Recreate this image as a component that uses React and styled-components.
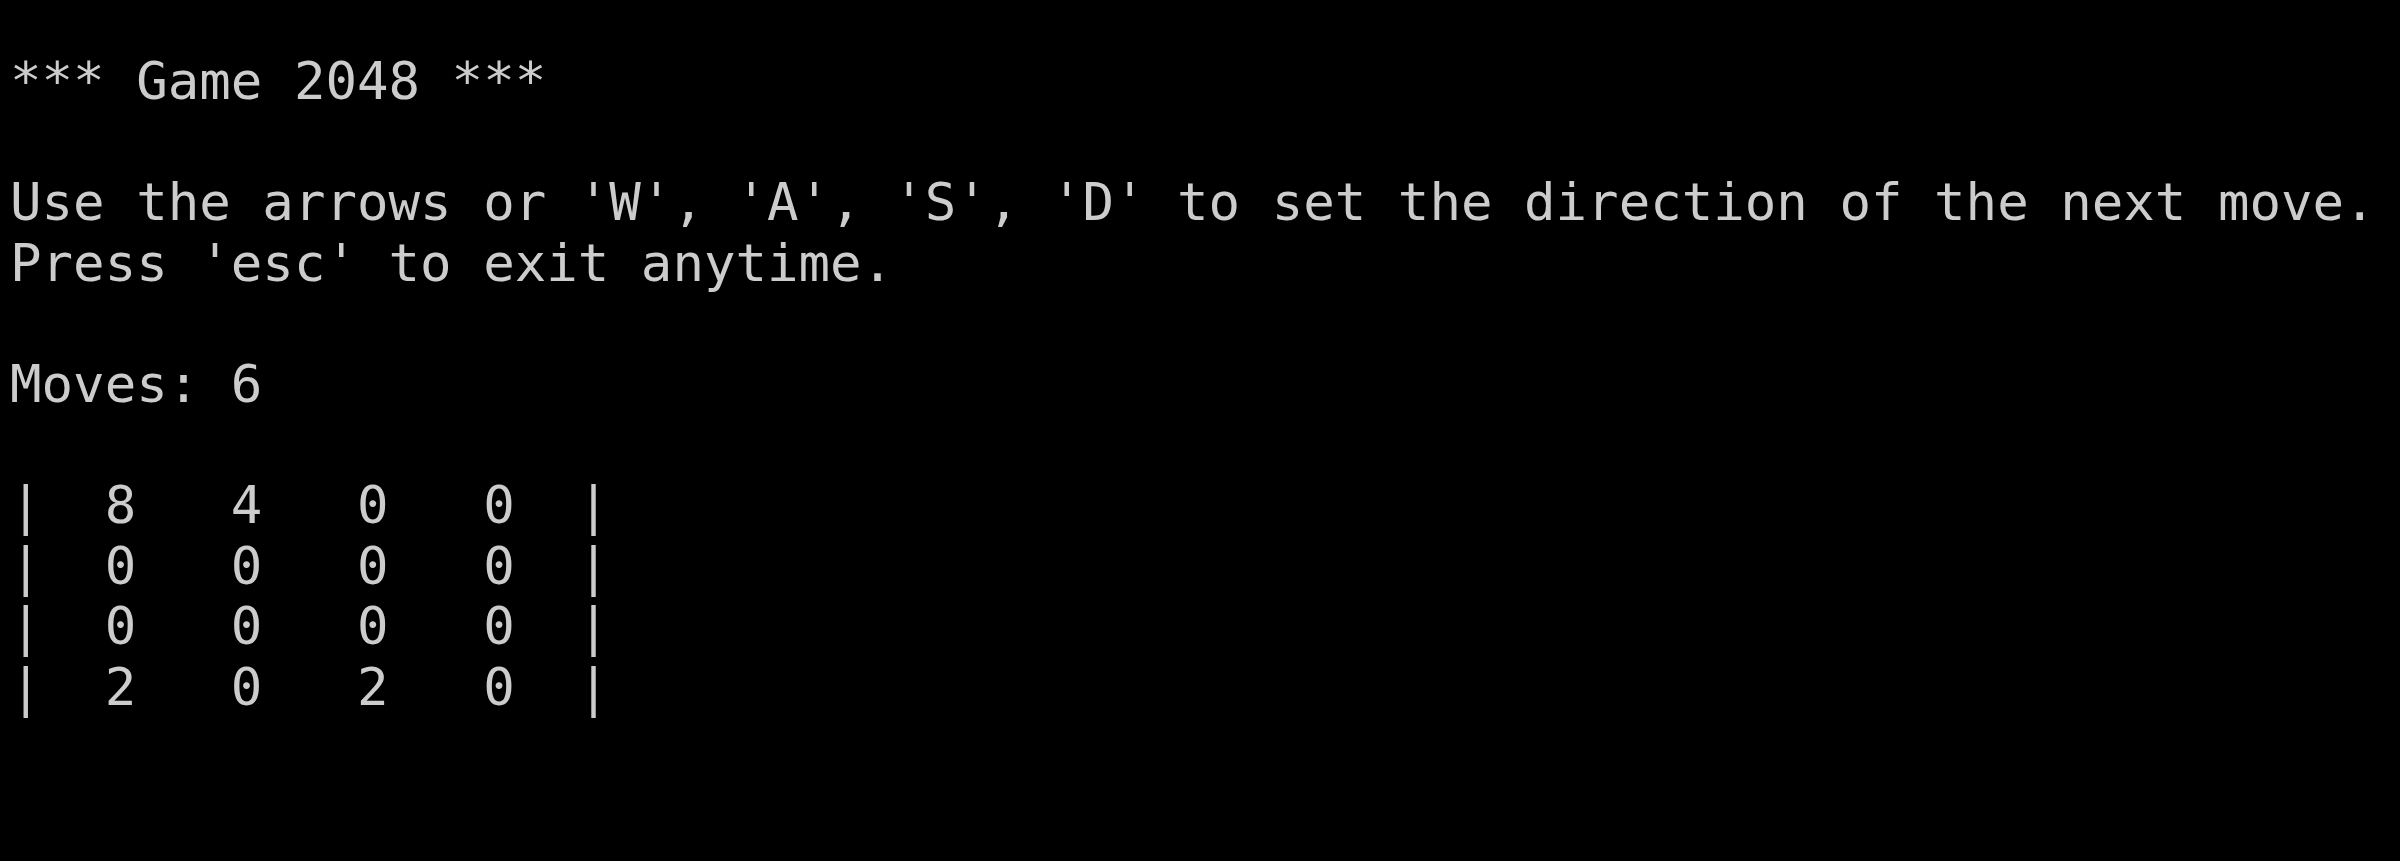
import React from "react";
import styled, { createGlobalStyle } from "styled-components";

const GlobalStyle = createGlobalStyle`
  html, body {
    margin: 0;
    padding: 0;
    background: #000000;
  }
`;

const Terminal = styled.div`
  width: 2400px;
  height: 861px;
  box-sizing: border-box;
  padding: 51px 0 0 10px;
  background: #000000;
  color: #cccccc;
  font-family: "DejaVu Sans Mono", "Liberation Mono", monospace;
  font-size: 52.4px;
  line-height: 60.6px;
  overflow: hidden;
`;

const Line = styled.div`
  white-space: pre;
  height: 60.6px;
`;

const Board = styled.div`
  display: flex;
  flex-direction: column;
`;

const board = [
  [8, 4, 0, 0],
  [0, 0, 0, 0],
  [0, 0, 0, 0],
  [2, 0, 2, 0],
];

function formatRow(row) {
  return "|" + row.map((n) => String(n).padStart(3, " ")).join(" ") + "  |";
}

export default function App() {
  const moves = 6;
  return (
    <>
      <GlobalStyle />
      <Terminal>
        <Line>*** Game 2048 ***</Line>
        <Line />
        <Line>Use the arrows or 'W', 'A', 'S', 'D' to set the direction of the next move.</Line>
        <Line>Press 'esc' to exit anytime.</Line>
        <Line />
        <Line>Moves: {moves}</Line>
        <Line />
        <Board>
          {board.map((row, i) => (
            <Line key={i}>{formatRow(row)}</Line>
          ))}
        </Board>
      </Terminal>
    </>
  );
}
